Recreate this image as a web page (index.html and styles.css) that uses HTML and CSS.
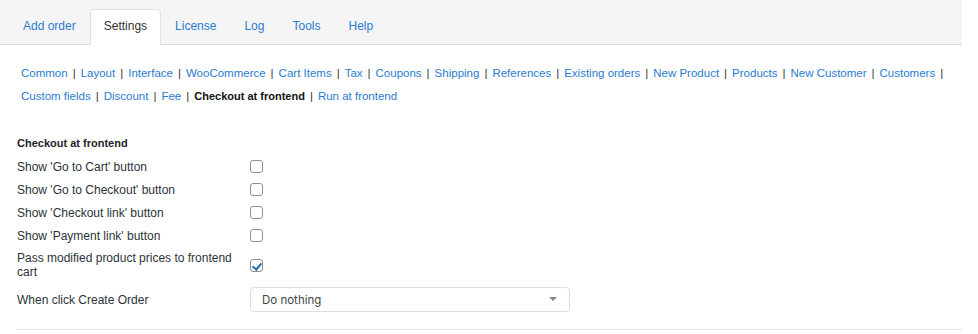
FILE: index.html
```html
<!DOCTYPE html>
<html lang="en">
<head>
    <meta charset="UTF-8">
    <title>Settings - Checkout at frontend</title>
    <link rel="stylesheet" href="styles.css">
</head>
<body>
    <div class="wrap">
        <nav class="tabs">
            <a href="#" class="tab">Add order</a>
            <a href="#" class="tab tab-active">Settings</a>
            <a href="#" class="tab">License</a>
            <a href="#" class="tab">Log</a>
            <a href="#" class="tab">Tools</a>
            <a href="#" class="tab">Help</a>
        </nav>

        <ul class="subnav">
            <li><a href="#">Common</a></li>
            <li><a href="#">Layout</a></li>
            <li><a href="#">Interface</a></li>
            <li><a href="#">WooCommerce</a></li>
            <li><a href="#">Cart Items</a></li>
            <li><a href="#">Tax</a></li>
            <li><a href="#">Coupons</a></li>
            <li><a href="#">Shipping</a></li>
            <li><a href="#">References</a></li>
            <li><a href="#">Existing orders</a></li>
            <li><a href="#">New Product</a></li>
            <li><a href="#">Products</a></li>
            <li><a href="#">New Customer</a></li>
            <li><a href="#">Customers</a></li>
            <li><a href="#">Custom fields</a></li>
            <li><a href="#">Discount</a></li>
            <li><a href="#">Fee</a></li>
            <li class="current">Checkout at frontend</li>
            <li class="last"><a href="#">Run at frontend</a></li>
        </ul>

        <div class="section">
            <h3>Checkout at frontend</h3>
            <div class="row">
                <label class="row-label">Show 'Go to Cart' button</label>
                <input type="checkbox" class="check">
            </div>
            <div class="row">
                <label class="row-label">Show 'Go to Checkout' button</label>
                <input type="checkbox" class="check">
            </div>
            <div class="row">
                <label class="row-label">Show 'Checkout link' button</label>
                <input type="checkbox" class="check">
            </div>
            <div class="row">
                <label class="row-label">Show 'Payment link' button</label>
                <input type="checkbox" class="check">
            </div>
            <div class="row row-tall">
                <label class="row-label">Pass modified product prices to frontend cart</label>
                <input type="checkbox" class="check" checked>
            </div>
            <div class="row row-select">
                <label class="row-label">When click Create Order</label>
                <div class="select">
                    <span>Do nothing</span>
                    <span class="caret"></span>
                </div>
            </div>
        </div>
    </div>
</body>
</html>
```
FILE: styles.css
```css
* {
    margin: 0;
    padding: 0;
    box-sizing: border-box;
}

body {
    font-family: "Liberation Sans", Arial, sans-serif;
    font-size: 12px;
    color: #2c3338;
    background: #fff;
}

a {
    color: #2a7bd0;
    text-decoration: none;
}

.wrap {
    width: 962px;
}

/* top tabs */
.tabs {
    display: flex;
    align-items: flex-end;
    height: 45px;
    padding: 0 9px;
    background: #f5f5f5;
    border-bottom: 1px solid #dcdcdc;
}

.tab {
    display: block;
    height: 35px;
    line-height: 32px;
    padding: 0 13px;
    font-size: 12px;
    border: 1px solid transparent;
    border-bottom: none;
    border-radius: 4px 4px 0 0;
}

.tab-active {
    background: #fff;
    color: #333;
    border-color: #e2e2e2;
    margin-bottom: -1px;
    height: 36px;
}

/* section links */
.subnav {
    list-style: none;
    display: flex;
    flex-wrap: wrap;
    padding: 17px 8px 0 21px;
    line-height: 23px;
    font-size: 11.5px;
}

.subnav li::after {
    content: "|";
    color: #333;
    font-weight: normal;
    font-size: 11.5px;
    margin: 0 5px;
}

.subnav li.last::after {
    content: none;
}

.subnav .current {
    font-weight: bold;
    font-size: 11px;
    color: #111;
}

/* form */
.section {
    margin: 27px 0 0 17px;
    padding-bottom: 17px;
    border-bottom: 1px solid #e3e3e3;
}

.section h3 {
    font-size: 11px;
    font-weight: bold;
    line-height: 16px;
    margin-bottom: 4px;
    color: #1d2327;
}

.row {
    display: flex;
    align-items: center;
    height: 23px;
}

.row-label {
    width: 233px;
    padding-right: 10px;
    line-height: 14px;
}

.row-tall {
    height: auto;
    padding: 4px 0 8px;
}

.check {
    appearance: none;
    width: 13px;
    height: 13px;
    border: 1px solid #8c8f94;
    border-radius: 3px;
    background: #fff;
    position: relative;
}

.check:checked::after {
    content: "";
    position: absolute;
    left: 3px;
    top: 1px;
    width: 4px;
    height: 7px;
    border: solid #2271b1;
    border-width: 0 2px 2px 0;
    transform: rotate(40deg);
}

.row-select {
    height: 25px;
}

.select {
    display: flex;
    align-items: center;
    justify-content: space-between;
    width: 320px;
    height: 25px;
    padding: 0 12px 0 11px;
    border: 1px solid #ddd;
    border-radius: 4px;
    font-family: Inter, "Noto Sans", sans-serif;
    font-size: 11.5px;
    color: #444;
}

.caret {
    width: 0;
    height: 0;
    border-left: 4px solid transparent;
    border-right: 4px solid transparent;
    border-top: 4px solid #888;
    margin-top: -2px;
}
```
